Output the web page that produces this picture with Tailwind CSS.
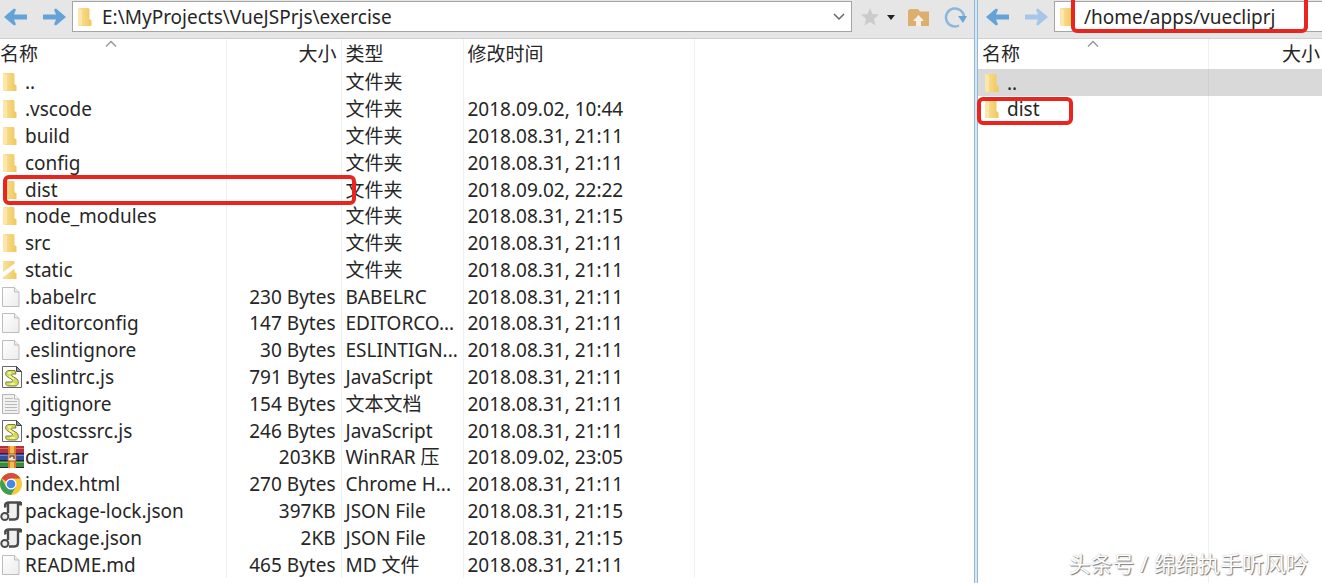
<!DOCTYPE html>
<html lang="zh-CN">
<head>
  <meta charset="UTF-8">
  <meta name="viewport" content="width=device-width, initial-scale=1.0">
  <title>exercise</title>
  <script src="https://cdn.jsdelivr.net/npm/@tailwindcss/browser@4"></script>
</head>
<body class="h-screen overflow-hidden bg-white font-['Noto_Sans','Noto_Sans_CJK_SC',sans-serif] text-[19px] leading-[26px] text-[#262626]">
  <!-- Icons -->
  <svg class="absolute size-0">
    <defs>
      <linearGradient id="gold" x1="0" x2="1"><stop offset="0" stop-color="#fae29a"/><stop offset="1" stop-color="#f0c75e"/></linearGradient>
      <linearGradient id="paper" x1="0" x2="1" y2="1"><stop offset="0" stop-color="#fff"/><stop offset="1" stop-color="#ececec"/></linearGradient>
    </defs>
    <symbol id="folder" viewBox="0 0 24 24">
      <path d="M3 3h10.500l1 1v10l2 1.500V21H3z" fill="url(#gold)"/>
      <path d="M3 3l4 2v15l-2 1H3z" fill="#fbe7ab"/>
    </symbol>
    <symbol id="link" viewBox="0 0 24 24">
      <path d="M3 3h10.500l1 1v10l2 1.500V21H3z" fill="url(#gold)"/>
      <path d="M2 15L16 4.500V9.500L5 18l-3 1z" fill="#fff"/>
    </symbol>
    <symbol id="file" viewBox="0 0 24 24">
      <path d="M2.500 2.500h12l4.500 4.500v14.500H2.500z" fill="url(#paper)" stroke="#bdbdbd"/>
      <path d="M14.500 2.500V7H19" fill="#eee" stroke="#bdbdbd"/>
    </symbol>
    <symbol id="text" viewBox="0 0 24 24">
      <path d="M2.500 2.500h12l4.500 4.500v14.500H2.500z" fill="#f1f1f1" stroke="#b5b5b5"/>
      <path d="M14.500 2.500V7H19" fill="#fff" stroke="#b5b5b5"/>
      <path d="M5 6.500h8M5 9.500h12M5 12.500h12M5 15.500h12M5 18.500h12" stroke="#b9b9b9"/>
    </symbol>
    <symbol id="script" viewBox="0 0 24 24">
      <path d="M2.500 1.500h14l5 5v16h-19z" fill="#fff" stroke="#65666c"/>
      <path d="M16.500 1.500v5h5z" fill="#9295a5" stroke="#44454c"/>
      <path d="M15 5.500H9C5 5.500 5 10 7 11.500l5 3c1 1 0 2.500-1 2.500H6c-1 3 1 4 3 4h6c4 0 4-5 2-7l-5-3c-1-1 0-2 1-2h3z" fill="#d5dc5c" stroke="#7b8040"/>
      <path d="M8 8h3M9 11l5 3M10 19h5" stroke="#f7f9ab" stroke-width="1.500"/>
    </symbol>
    <symbol id="rar" viewBox="0 0 24 24">
      <path d="M0 1h24v8H0z" fill="#b5313a"/><path d="M0 8.500h24v7H0z" fill="#374ca5"/><path d="M0 15.500h24V23H0z" fill="#3c8b3e"/>
      <path d="M0 3.500h24" stroke="#df6870"/><path d="M0 10.500h24" stroke="#7482cb"/><path d="M0 17.500h24" stroke="#72bd62"/>
      <path d="M0 8.500h24M0 15.500h24M0 22.500h24" stroke="#242435"/>
      <path d="M8 1h8v22H8z" fill="#dc792d"/><path d="M10 1h4v22h-4z" fill="#f4bd49"/>
      <path d="M8 9h8v7H8z" fill="#efe8dc" stroke="#965322"/><path d="M10 13v-2h4v3" fill="none" stroke="#8b4d26" stroke-width="1.500"/>
    </symbol>
    <symbol id="chrome" viewBox="0 0 24 24">
      <circle cx="11" cy="12" r="11" fill="#f5cb38"/>
      <path d="M11 12L1.500 6.500A11 11 0 0 1 20.500 6.500H11z" fill="#d94b3d"/>
      <path d="M1.500 6.500A11 11 0 0 0 11 23l4.800-8.300L11 12l-4.800 2.700z" fill="#3b9d58"/>
      <circle cx="11" cy="12" r="5.500" fill="#fff"/><circle cx="11" cy="12" r="4.300" fill="#4a86e8"/>
    </symbol>
    <symbol id="json" viewBox="0 0 24 24">
      <path d="M8 4h10v13c0 3-2 4-4 4H8z" fill="#f0f0f0"/>
      <path d="M5.500 8.500c-1-3 0-5 3-5H21M18 4v12.500c0 3-1 4-3.500 4H9M8 4v10" fill="none" stroke="#4b4b4b" stroke-width="2.400"/>
      <path d="M18 3h4v3.500h-3z" fill="#4b4b4b"/>
      <circle cx="4.800" cy="17.500" r="3.500" fill="#eee" stroke="#4b4b4b" stroke-width="2"/>
    </symbol>
    <symbol id="arrow" viewBox="0 0 24 24"><path d="M0 12L10 3.500l2 1-2 5h13v5H10l2 5-2 1z" fill="currentColor"/></symbol>
  </svg>

  <div class="relative grid h-full grid-cols-[974fr_4px_344fr]">
    <!-- Local pane -->
    <section class="flex min-w-0 flex-col">
      <div class="flex h-[39px] items-start border-b border-[#cfcfcf] bg-[#e6e6e6] pt-px">
        <button aria-label="后退" class="ml-1 mt-1 text-[#64a3d8]"><svg class="size-6"><use href="#arrow"/></svg></button>
        <button aria-label="前进" class="ml-[14px] mt-1 rotate-180 text-[#64a3d8]"><svg class="size-6"><use href="#arrow"/></svg></button>
        <label class="ml-[6px] flex h-[31px] min-w-0 flex-1 items-center border border-[#a5a5a5] bg-white pr-1">
          <svg class="ml-[2px] size-6 shrink-0"><use href="#folder"/></svg>
          <input aria-label="路径" value="E:\MyProjects\VueJSPrjs\exercise" class="ml-[3px] min-w-0 flex-1 outline-none">
          <svg class="size-4" fill="none" stroke="#666" stroke-width="1.500" viewBox="0 0 16 16"><path d="M3 5l5 5 5-5"/></svg>
        </label>
        <div class="flex w-[122px] shrink-0 items-center pl-2 pt-1">
          <button aria-label="收藏"><svg class="size-5" viewBox="0 0 20 20"><path d="M10 1l2.500 6 6.500.5-5 4.500 1.500 6.500L10 15l-5.500 3.500L6 12 1 7.500 7.500 7z" fill="#cbcbcb"/></svg></button>
          <button aria-label="收藏列表" class="ml-[6px]"><svg class="h-6 w-[10px]" viewBox="0 0 10 24"><path d="M1 10h8l-4 5z" fill="#222"/></svg></button>
          <button aria-label="主目录" class="ml-3"><svg class="h-6 w-[22px]" viewBox="0 0 22 24"><path d="M0 5.500L2 4h8l2 2.500h9V21H0z" fill="#dbb06f"/><path d="M10.500 10l5.500 6h-3v5H8v-5H5z" fill="#f5efe6"/></svg></button>
          <button aria-label="刷新" class="ml-[14px]"><svg class="size-6" viewBox="0 0 24 24"><path d="M15 20.500A9 9 0 1 1 20 12" fill="none" stroke="#8ab7dd" stroke-width="2.500"/><path d="M14 11h9l-4 7z" fill="#6ba5d8"/></svg></button>
        </div>
      </div>
      <div class="min-h-0 flex-1 pb-[5px]">
        <table class="h-full w-full table-fixed border-collapse">
          <colgroup><col class="w-[226px]"><col class="w-[115px]"><col class="w-[122px]"><col class="w-[231px]"><col></colgroup>
          <thead>
            <tr class="h-[30px] text-left">
              <th class="relative border-r border-[#f1f1f1] font-normal">名称
                <svg class="absolute left-[105px] top-px h-2 w-3" viewBox="0 0 12 8" fill="none" stroke="#999" stroke-width="1.500"><path d="M1 6.500l5-5 5 5"/></svg>
              </th>
              <th class="border-r border-[#f1f1f1] pr-1 text-right font-normal">大小</th>
              <th class="border-r border-[#f1f1f1] pl-1 font-normal">类型</th>
              <th class="border-r border-[#f1f1f1] pl-1 font-normal">修改时间</th>
              <td></td>
            </tr>
          </thead>
          <tbody id="files"></tbody>
        </table>
      </div>
    </section>

    <div class="border-x border-[#8db9dc] bg-[#dce6ee]"></div>

    <!-- Remote pane -->
    <section class="flex min-w-0 flex-col">
      <div class="flex h-[39px] items-start border-b border-[#cfcfcf] bg-[#e6e6e6] pt-px">
        <button aria-label="后退" class="ml-2 mt-1 text-[#64a3d8]"><svg class="size-6"><use href="#arrow"/></svg></button>
        <button aria-label="前进" class="ml-[14px] mt-1 rotate-180 text-[#a5c6e6]"><svg class="size-6"><use href="#arrow"/></svg></button>
        <label class="relative ml-[6px] flex h-[31px] min-w-0 flex-1 items-center border border-r-0 border-[#a5a5a5] bg-white">
          <svg class="ml-[2px] size-6 shrink-0"><use href="#folder"/></svg>
          <input aria-label="远程路径" value="/home/apps/vuecliprj" class="ml-[3px] min-w-0 flex-1 outline-none">
          <span class="absolute -top-2 bottom-[-2px] left-4 right-[14px] rounded-md border-4 border-[#e8261f]"></span>
        </label>
      </div>
      <div class="min-h-0 flex-1">
        <table class="h-full w-full table-fixed border-collapse">
          <colgroup><col class="w-[230px]"><col></colgroup>
          <thead>
            <tr class="h-[30px] text-left">
              <th class="relative border-r border-[#f1f1f1] pl-1 font-normal">名称
                <svg class="absolute left-[109px] top-px h-2 w-3" viewBox="0 0 12 8" fill="none" stroke="#999" stroke-width="1.500"><path d="M1 6.500l5-5 5 5"/></svg>
              </th>
              <th class="pr-[2px] text-right font-normal">大小</th>
            </tr>
          </thead>
          <tbody>
            <tr class="h-[27px] bg-[#d9d9d9]">
              <td class="border-r border-[#d0d0d0] pl-1"><div class="flex items-center gap-px"><svg class="size-6"><use href="#folder"/></svg>..</div></td>
              <td></td>
            </tr>
            <tr class="h-[26px]">
              <td class="relative border-r border-[#f1f1f1] pl-1"><div class="flex items-center gap-px"><svg class="size-6"><use href="#folder"/></svg>dist</div>
                <span class="absolute -left-px top-px h-7 w-24 rounded-md border-4 border-[#e8261f]"></span>
              </td>
              <td></td>
            </tr>
            <tr><td class="border-r border-[#f1f1f1]"></td><td></td></tr>
          </tbody>
        </table>
      </div>
    </section>

    <div class="absolute bottom-1 right-[14px] text-[22px] leading-8 text-white [text-shadow:1px_1px_1px_#777,0_0_1px_#aaa]">头条号 / 绵绵执手听风吟</div>
  </div>

  <script>
    // icon, name, size, type, modified
    const files = [
      ["folder", "..", "", "文件夹", ""],
      ["folder", ".vscode", "", "文件夹", "2018.09.02, 10:44"],
      ["folder", "build", "", "文件夹", "2018.08.31, 21:11"],
      ["folder", "config", "", "文件夹", "2018.08.31, 21:11"],
      ["folder", "dist", "", "文件夹", "2018.09.02, 22:22"],
      ["folder", "node_modules", "", "文件夹", "2018.08.31, 21:15"],
      ["folder", "src", "", "文件夹", "2018.08.31, 21:11"],
      ["link", "static", "", "文件夹", "2018.08.31, 21:11"],
      ["file", ".babelrc", "230 Bytes", "BABELRC", "2018.08.31, 21:11"],
      ["file", ".editorconfig", "147 Bytes", "EDITORCO...", "2018.08.31, 21:11"],
      ["file", ".eslintignore", "30 Bytes", "ESLINTIGN...", "2018.08.31, 21:11"],
      ["script", ".eslintrc.js", "791 Bytes", "JavaScript", "2018.08.31, 21:11"],
      ["text", ".gitignore", "154 Bytes", "文本文档", "2018.08.31, 21:11"],
      ["script", ".postcssrc.js", "246 Bytes", "JavaScript", "2018.08.31, 21:11"],
      ["rar", "dist.rar", "203KB", "WinRAR 压", "2018.09.02, 23:05"],
      ["chrome", "index.html", "270 Bytes", "Chrome H...", "2018.08.31, 21:11"],
      ["json", "package-lock.json", "397KB", "JSON File", "2018.08.31, 21:15"],
      ["json", "package.json", "2KB", "JSON File", "2018.08.31, 21:15"],
      ["file", "README.md", "465 Bytes", "MD 文件", "2018.08.31, 21:11"],
    ];
    const mark = '<span class="absolute left-[3px] -top-px h-[30px] w-[353px] rounded-md border-4 border-[#e8261f]"></span>';

    document.getElementById("files").innerHTML = files.map(([icon, name, size, type, date]) => `
      <tr class="whitespace-nowrap">
        <td class="relative border-r border-[#f1f1f1] p-0"><div class="flex items-center gap-px"><svg class="size-6 shrink-0"><use href="#${icon}"/></svg>${name}</div>${name === "dist" ? mark : ""}</td>
        <td class="border-r border-[#f1f1f1] pr-[5px] text-right">${size}</td>
        <td class="border-r border-[#f1f1f1] pl-1">${type}</td>
        <td class="border-r border-[#f1f1f1] pl-1">${date}</td>
        <td></td>
      </tr>`).join("");
  </script>
</body>
</html>
